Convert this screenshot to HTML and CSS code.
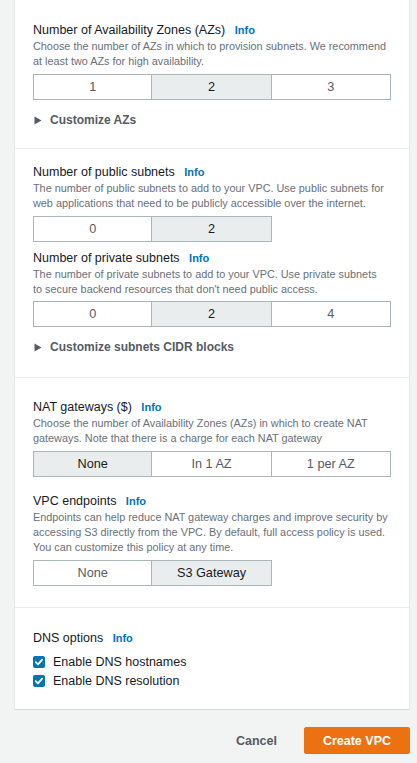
FILE: index.html
```html
<!DOCTYPE html>
<html lang="en">
<head>
<meta charset="utf-8">
<title>Create VPC</title>
<link rel="stylesheet" href="styles.css">
</head>
<body>
<div class="card">
  <section class="sec sec1">
    <div class="label">Number of Availability Zones (AZs) <a class="info">Info</a></div>
    <div class="desc">Choose the number of AZs in which to provision subnets. We recommend at least two AZs for high availability.</div>
    <div class="seg">
      <div class="opt">1</div>
      <div class="opt sel">2</div>
      <div class="opt">3</div>
    </div>
    <div class="expand">
      <svg class="caret" width="8" height="9" viewBox="0 0 8 9"><polygon points="0.5,0.5 7.5,4.5 0.5,8.5" fill="#545b64"/></svg>
      <span>Customize AZs</span>
    </div>
  </section>

  <section class="sec sec2">
    <div class="label">Number of public subnets <a class="info">Info</a></div>
    <div class="desc">The number of public subnets to add to your VPC. Use public subnets for web applications that need to be publicly accessible over the internet.</div>
    <div class="seg">
      <div class="opt">0</div>
      <div class="opt sel">2</div>
    </div>
    <div class="label gapped">Number of private subnets <a class="info">Info</a></div>
    <div class="desc">The number of private subnets to add to your VPC. Use private subnets<br>to secure backend resources that don't need public access.</div>
    <div class="seg">
      <div class="opt">0</div>
      <div class="opt sel">2</div>
      <div class="opt">4</div>
    </div>
    <div class="expand">
      <svg class="caret" width="8" height="9" viewBox="0 0 8 9"><polygon points="0.5,0.5 7.5,4.5 0.5,8.5" fill="#545b64"/></svg>
      <span>Customize subnets CIDR blocks</span>
    </div>
  </section>

  <section class="sec sec3">
    <div class="label">NAT gateways ($) <a class="info">Info</a></div>
    <div class="desc">Choose the number of Availability Zones (AZs) in which to create NAT gateways. Note that there is a charge for each NAT gateway</div>
    <div class="seg">
      <div class="opt sel">None</div>
      <div class="opt">In 1 AZ</div>
      <div class="opt">1 per AZ</div>
    </div>
    <div class="label gapped2">VPC endpoints <a class="info">Info</a></div>
    <div class="desc">Endpoints can help reduce NAT gateway charges and improve security by accessing S3 directly from the VPC. By default, full access policy is used. You can customize this policy at any time.</div>
    <div class="seg">
      <div class="opt">None</div>
      <div class="opt sel">S3 Gateway</div>
    </div>
  </section>

  <section class="sec sec4">
    <div class="label">DNS options <a class="info">Info</a></div>
    <div class="checks">
      <label class="check">
        <svg width="12" height="12" viewBox="0 0 12 12"><rect x="0" y="0" width="12" height="12" rx="2" fill="#0073bb"/><polyline points="2.8,6.2 5,8.4 9.2,3.6" fill="none" stroke="#fff" stroke-width="1.8" stroke-linecap="round" stroke-linejoin="round"/></svg>
        <span>Enable DNS hostnames</span>
      </label>
      <label class="check">
        <svg width="12" height="12" viewBox="0 0 12 12"><rect x="0" y="0" width="12" height="12" rx="2" fill="#0073bb"/><polyline points="2.8,6.2 5,8.4 9.2,3.6" fill="none" stroke="#fff" stroke-width="1.8" stroke-linecap="round" stroke-linejoin="round"/></svg>
        <span>Enable DNS resolution</span>
      </label>
    </div>
  </section>
</div>

<div class="footer">
  <button class="btn cancel">Cancel</button>
  <button class="btn primary">Create VPC</button>
</div>
</body>
</html>
```

FILE: styles.css
```css
* { box-sizing: border-box; }

html, body {
  margin: 0;
  padding: 0;
  background: #f2f3f3;
  font-family: "Liberation Sans", Arial, sans-serif;
  color: #16191f;
}

.card {
  margin-left: 14px;
  width: 396px;
  background: #fff;
  border-left: 1px solid #e4e8e8;
  border-right: 1px solid #e4e8e8;
  border-bottom: 1px solid #d5dbdb;
}

.sec {
  padding: 0 18px;
}
.sec + .sec {
  border-top: 1px solid #eaeded;
}
.sec1 { padding-top: 22px; padding-bottom: 20px; }
.sec2 { padding-top: 15px; padding-bottom: 22px; }
.sec3 { padding-top: 21px; padding-bottom: 21.5px; }
.sec4 { padding-top: 22px; padding-bottom: 18px; }

.label {
  font-size: 12.5px;
  line-height: 16px;
  color: #16191f;
  white-space: nowrap;
}
.label.gapped { margin-top: 8px; }
.label.gapped2 { margin-top: 16.5px; }

.info {
  margin-left: 6px;
  font-size: 11px;
  font-weight: bold;
  color: #0073bb;
  text-decoration: none;
}

.desc {
  margin-top: 1px;
  font-size: 10.85px;
  line-height: 15px;
  color: #687078;
}

.seg {
  margin-top: 4.5px;
  display: grid;
  grid-template-columns: repeat(3, 1fr);
  height: 26px;
}
.opt {
  border-top: 1px solid #aab7b8;
  border-bottom: 1px solid #aab7b8;
  border-right: 1px solid #aab7b8;
  font-size: 12.7px;
  line-height: 24px;
  text-align: center;
  color: #545b64;
  background: #fff;
}
.opt:first-child {
  border-left: 1px solid #aab7b8;
}
.opt.sel {
  background: #eaeded;
  color: #16191f;
}

.expand {
  margin-top: 12.5px;
  display: flex;
  align-items: center;
  height: 16px;
  font-size: 12px;
  font-weight: bold;
  color: #545b64;
}
.sec2 .expand { margin-top: 12px; }
.caret {
  margin-left: 1px;
  margin-right: 8px;
  display: block;
}

.checks {
  margin-top: 6px;
}
.check {
  display: flex;
  align-items: center;
  height: 19.5px;
  font-size: 12.5px;
  color: #16191f;
}
.check svg {
  display: block;
  margin-right: 8px;
  flex: none;
}

.footer {
  margin-top: 17px;
  display: flex;
  justify-content: flex-end;
  align-items: center;
  gap: 8px;
  padding-right: 7px;
}
.btn {
  font-family: "Liberation Sans", Arial, sans-serif;
  font-size: 12.5px;
  font-weight: bold;
  height: 27px;
  padding: 0 18px;
  border-radius: 2px;
  border: 1px solid transparent;
  cursor: pointer;
}
.cancel {
  background: transparent;
  color: #545b64;
}
.primary {
  background: #ec7211;
  border-color: #ec7211;
  color: #fff;
}
```
